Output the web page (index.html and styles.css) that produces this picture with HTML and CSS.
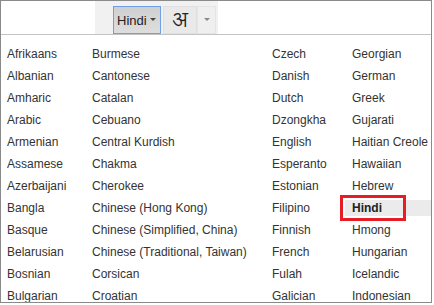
FILE: index.html
```html
<!doctype html>
<html>
  <head>
    <meta charset="UTF-8" />
    <title>Translate - language picker</title>
    <link rel="stylesheet" href="styles.css">
  </head>
  <body>
    <div class="frame">
      <!-- toolbar -->
      <div class="toolbar">
        <div class="tools">
          <div class="lang-button">
            <span>Hindi</span>
            <span class="caret"></span>
          </div>
          <div class="script-button">अ</div>
          <div class="script-menu"><span class="caret caret-light"></span></div>
        </div>
      </div>
      <!-- language list -->
      <div class="lang-list">
        <div class="item">Afrikaans</div>
        <div class="item">Albanian</div>
        <div class="item">Amharic</div>
        <div class="item">Arabic</div>
        <div class="item">Armenian</div>
        <div class="item">Assamese</div>
        <div class="item">Azerbaijani</div>
        <div class="item">Bangla</div>
        <div class="item">Basque</div>
        <div class="item">Belarusian</div>
        <div class="item">Bosnian</div>
        <div class="item">Bulgarian</div>

        <div class="item">Burmese</div>
        <div class="item">Cantonese</div>
        <div class="item">Catalan</div>
        <div class="item">Cebuano</div>
        <div class="item">Central Kurdish</div>
        <div class="item">Chakma</div>
        <div class="item">Cherokee</div>
        <div class="item">Chinese (Hong Kong)</div>
        <div class="item">Chinese (Simplified, China)</div>
        <div class="item">Chinese (Traditional, Taiwan)</div>
        <div class="item">Corsican</div>
        <div class="item">Croatian</div>

        <div class="item">Czech</div>
        <div class="item">Danish</div>
        <div class="item">Dutch</div>
        <div class="item">Dzongkha</div>
        <div class="item">English</div>
        <div class="item">Esperanto</div>
        <div class="item">Estonian</div>
        <div class="item">Filipino</div>
        <div class="item">Finnish</div>
        <div class="item">French</div>
        <div class="item">Fulah</div>
        <div class="item">Galician</div>

        <div class="item">Georgian</div>
        <div class="item">German</div>
        <div class="item">Greek</div>
        <div class="item">Gujarati</div>
        <div class="item">Haitian Creole</div>
        <div class="item">Hawaiian</div>
        <div class="item">Hebrew</div>
        <div class="item selected">Hindi</div>
        <div class="item">Hmong</div>
        <div class="item">Hungarian</div>
        <div class="item">Icelandic</div>
        <div class="item">Indonesian</div>
      </div>
    </div>
  </body>
</html>
```

FILE: styles.css
```css
body {
  width: 434px;
  height: 305px;
  overflow: hidden;
  margin: 0;
  background: #ffffff;
  font-family: 'Liberation Sans', Arial, sans-serif;
  color: #333333;
}

.frame {
  width: 432px;
  height: 303px;
  box-sizing: border-box;
  border: 1px solid #8a8a8a;
  overflow: hidden;
}

/* toolbar */
.toolbar {
  height: 34px;
  box-sizing: border-box;
  border-bottom: 1px solid #c4c4c4;
  display: flex;
}
.tools {
  margin-left: 94px;
  width: 123px;
  padding-left: 18px;
  box-sizing: border-box;
  background: #f1f1f1;
  display: flex;
  align-items: flex-end;
  gap: 2px;
}
.lang-button {
  width: 48px;
  height: 28px;
  box-sizing: border-box;
  border: 1px solid #6f9ee6;
  background: linear-gradient(#cfcfcf, #dedede);
  display: flex;
  align-items: center;
  gap: 3px;
  padding-left: 3px;
  font-size: 13px;
  color: #222222;
}
.caret {
  width: 0;
  height: 0;
  border-left: 3px solid transparent;
  border-right: 3px solid transparent;
  border-top: 3px solid #444444;
  margin-top: -2px;
}
.caret-light {
  border-top-color: #888888;
}
.script-button {
  width: 34px;
  height: 28px;
  box-sizing: border-box;
  padding-top: 2px;
  background: #e9e9e9;
  border: 1px solid #e0e0e0;
  display: flex;
  justify-content: center;
  align-items: center;
  font-family: 'Lohit Devanagari', 'FreeSans', 'Noto Sans', sans-serif;
  font-size: 21px;
  color: #222222;
}
.script-menu {
  width: 19px;
  height: 28px;
  margin-left: -2px;
  box-sizing: border-box;
  background: #efefef;
  border: 1px solid #e4e4e4;
  display: flex;
  justify-content: center;
  align-items: center;
}

/* language list */
.lang-list {
  padding: 8px 0 0 6px;
  display: grid;
  grid-auto-flow: column;
  grid-template-rows: repeat(12, 22px);
  grid-template-columns: 85px 180px 80px 1fr;
  font-size: 12px;
}
.item {
  display: flex;
  align-items: center;
  white-space: nowrap;
}
.item.selected {
  position: relative;
  align-self: center;
  height: 16px;
  margin-left: -7px;
  padding-left: 7px;
  background: #ebebeb;
  font-weight: bold;
  color: #222222;
}
/* red annotation box */
.item.selected::after {
  content: '';
  position: absolute;
  left: -5px;
  top: -5px;
  width: 66px;
  height: 26px;
  box-sizing: border-box;
  border: 3px solid #e81c24;
}
```
